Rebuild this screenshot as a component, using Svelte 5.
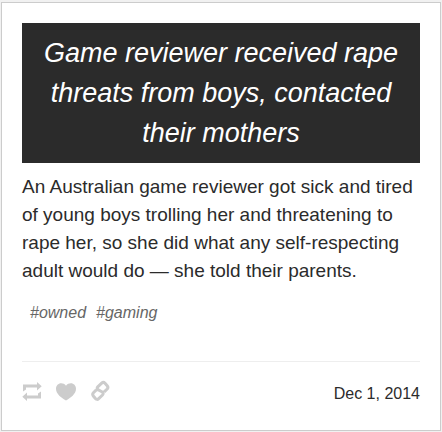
<script>
  const tags = ['owned', 'gaming'];
</script>

<article class="card">
  <h2>Game reviewer received rape threats from boys, contacted their mothers</h2>
  <p class="summary">
    An Australian game reviewer got sick and tired of young boys trolling her and threatening to
    rape her, so she did what any self-respecting adult would do — she told their parents.
  </p>
  <nav class="tags" aria-label="Tags">
    {#each tags as tag}
      <a href="#{tag}">#{tag}</a>
    {/each}
  </nav>
  <footer>
    <div class="actions">
      <button type="button" aria-label="Reblog">
        <svg width="20" height="20" viewBox="0 0 20 20" aria-hidden="true">
          <path d="M1 2.5H15V0L19.7 4.3L15 8.5V5.5H4V7.5L1 9.5ZM19 16.5H5V19L0.3 14.8L5 10.5V13.5H16V11.5L19 9.5Z" />
        </svg>
      </button>
      <button type="button" aria-label="Like">
        <svg width="20" height="20" viewBox="0 0 20 20" aria-hidden="true">
          <path d="M10 3.8C11.3 2 13 1.3 14.8 1.3C17.8 1.3 20 3.7 20 6.8C20 12 14.5 16 10 18.6C5.5 16 0 12 0 6.8C0 3.7 2.2 1.3 5.2 1.3C7 1.3 8.7 2 10 3.8Z" />
        </svg>
      </button>
      <button type="button" aria-label="Permalink">
        <svg width="20" height="20" viewBox="0 0 20 20" aria-hidden="true">
          <path
            class="chain"
            d="M14.2 9.9L17.2 7Q18.6 5.4 17.2 3.8L15 1.2Q13.4 -0.5 11.7 1.1L8 4.6Q6.5 6.2 7.9 7.7L12.3 10Q14 11.4 12.5 13L8.7 16.6Q7 18.2 5.4 16.5L3.3 14Q2 12.4 3.4 10.8L6.3 7.900"
          />
        </svg>
      </button>
    </div>
    <time datetime="2014-12-01">Dec 1, 2014</time>
  </footer>
</article>

<style>
  :global(body) {
    background: #f1f1f1;
    font-family: "Liberation Sans", Arial, Helvetica, sans-serif;
    font-size: 16px;
    line-height: 20px;
    color: #2b2b2b;
  }

  .card {
    margin: 2px 1px 1px;
    padding: 20px;
    border: 1px solid #ccc;
    background: #fff;
  }

  h2 {
    margin: 0;
    padding: 10px 16px;
    background: #2b2b2b;
    color: #fff;
    font-size: 27px;
    font-style: italic;
    font-weight: 400;
    line-height: 40px;
    text-align: center;
  }

  .summary {
    margin: 10px 0 0;
    font-size: 19px;
    line-height: 28px;
  }

  .tags {
    display: flex;
    flex-wrap: wrap;
    gap: 10px;
    margin-top: 18px;
    padding-left: 8px;
  }

  .tags a {
    color: #666;
    font-style: italic;
    text-decoration: none;
  }

  footer {
    display: flex;
    align-items: flex-start;
    justify-content: space-between;
    margin-top: 38px;
    padding: 20px 0 4px;
    border-top: 1px solid #eee;
  }

  .actions {
    display: flex;
    gap: 14px;
  }

  button {
    padding: 0;
    border: 0;
    background: none;
    cursor: pointer;
  }

  svg {
    display: block;
    overflow: visible;
    fill: #ccc;
  }

  .chain {
    fill: none;
    stroke: #ccc;
    stroke-width: 3;
    stroke-linejoin: round;
  }

  time {
    line-height: 24px;
  }
</style>
